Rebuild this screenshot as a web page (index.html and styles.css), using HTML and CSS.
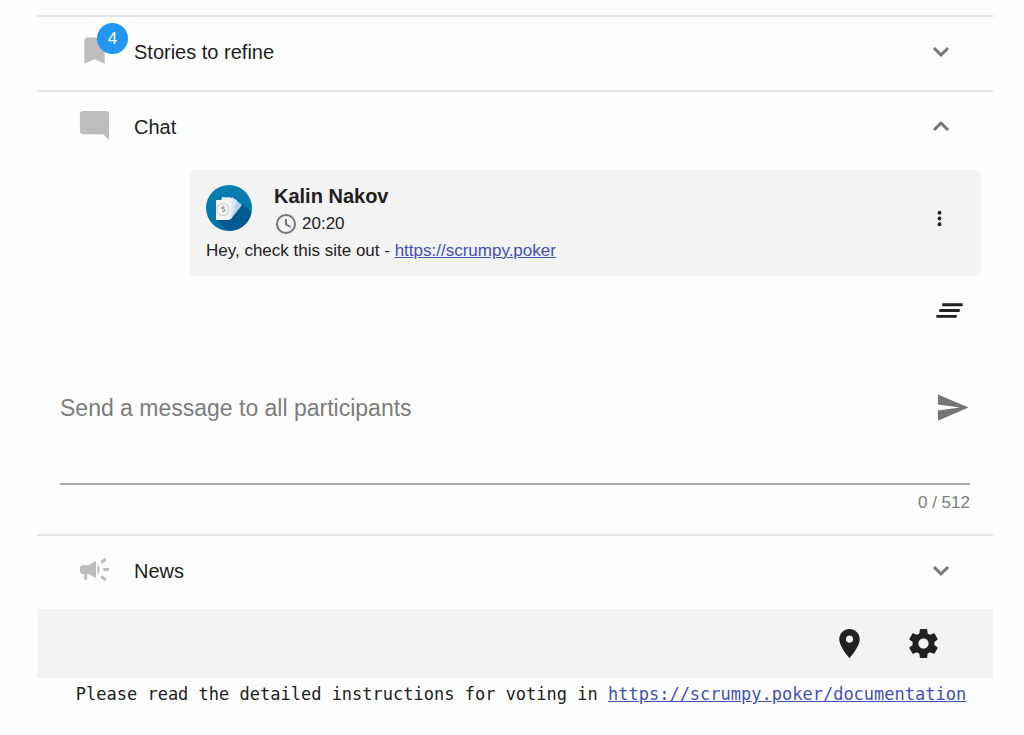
FILE: index.html
```
<!DOCTYPE html>
<html lang="en">
<head>
  <meta charset="UTF-8" />
  <title>Scrumpy Planning Poker</title>
  <meta name="viewport" content="width=device-width, initial-scale=1.0" />
  <link rel="stylesheet" href="styles.css">
</head>
<body>

<main class="room">

  <section class="panel">
    <button type="button" class="panel-header" aria-expanded="false">
      <span class="panel-icon">
        <svg class="icon" viewBox="0 0 24 24"><path d="M17 3H7c-1.1 0-1.99.9-1.99 2L5 21l7-3 7 3V5c0-1.1-.9-2-2-2z"/></svg>
        <span class="badge">4</span>
      </span>
      <span class="panel-title">Stories to refine</span>
      <svg class="chevron" viewBox="0 0 24 24"><path d="M5 8l7 7 7-7"/></svg>
    </button>
  </section>

  <section class="panel">
    <button type="button" class="panel-header" aria-expanded="true" aria-controls="chat">
      <span class="panel-icon">
        <svg class="icon" viewBox="0 0 24 24"><path d="M21.99 4c0-1.1-.89-2-1.99-2H4c-1.1 0-2 .9-2 2v12c0 1.1.9 2 2 2h14l4 4-.01-18z"/></svg>
      </span>
      <span class="panel-title">Chat</span>
      <svg class="chevron" viewBox="0 0 24 24"><path d="M5 15l7-7 7 7"/></svg>
    </button>

    <div class="chat" id="chat">
      <article class="message">
        <div class="message-content">
          <div class="message-head">
            <svg class="avatar" viewBox="0 0 46 46">
              <defs>
                <linearGradient id="avatarBg" x1="0" y1="0" x2="0" y2="1">
                  <stop offset="0" stop-color="#087fb0"/>
                  <stop offset="1" stop-color="#0670a2"/>
                </linearGradient>
                <clipPath id="avatarClip"><circle cx="23" cy="23" r="23"/></clipPath>
              </defs>
              <g clip-path="url(#avatarClip)">
                <rect width="46" height="46" fill="url(#avatarBg)"/>
                <path d="M11 35L23 47H47V28L36 19L25 32z" fill="#005a92"/>
                <path d="M26 12L36 20L25 34L15 27z" fill="#b5d3ee"/>
                <path d="M22 12L31 15L25 34L14 31z" fill="#d9e9f7"/>
                <path d="M16 12L26 13L25 33L12 32z" fill="#edf3f9"/>
                <rect x="10" y="15" width="14" height="20" rx="1" fill="#f5f5f5"/>
                <circle cx="17" cy="24.5" r="6" fill="#f5f5f5" stroke="#cfcfcf" stroke-width="1.2"/>
                <path d="M18.500 22h-2.500v2c2.500-.5 3 .5 2.700 1.700-.4 1.300-2 1.300-2.700.3" fill="none" stroke="#777"/>
              </g>
            </svg>
            <div>
              <div class="message-author">Kalin Nakov</div>
              <div class="message-time">
                <svg class="icon-small" viewBox="0 0 24 24"><circle cx="12" cy="12" r="9"/><path d="M12 7v5.500l4.500 2.500"/></svg>
                <time>20:20</time>
              </div>
            </div>
          </div>
          <p class="message-text">Hey, check this site out - <a href="https://scrumpy.poker">https://scrumpy.poker</a></p>
        </div>
        <button type="button" class="icon-button message-menu" aria-label="Message options">
          <svg class="icon-more" viewBox="0 0 24 24"><circle cx="12" cy="6" r="2"/><circle cx="12" cy="12" r="2"/><circle cx="12" cy="18" r="2"/></svg>
        </button>
      </article>

      <div class="chat-actions">
        <button type="button" class="icon-button" aria-label="Clear all messages">
          <svg class="icon" viewBox="0 0 24 24"><path d="M5 13h14v-2H5v2zm-2 4h14v-2H3v2zM7 7v2h14V7H7z"/></svg>
        </button>
      </div>

      <form class="composer">
        <div class="composer-field">
          <textarea maxlength="512" aria-label="Message" placeholder="Send a message to all participants"></textarea>
          <button type="submit" class="icon-button send" aria-label="Send">
            <svg class="icon" viewBox="0 0 24 24"><path d="M2.01 21L23 12 2.01 3 2 10l15 2-15 2z"/></svg>
          </button>
        </div>
        <div class="counter">0 / 512</div>
      </form>
    </div>
  </section>

  <section class="panel">
    <button type="button" class="panel-header" aria-expanded="false">
      <span class="panel-icon">
        <svg class="icon" viewBox="0 0 24 24"><path d="M18 11v2h4v-2h-4zm-2 6.61c.96.71 2.21 1.65 3.2 2.39.4-.53.8-1.07 1.2-1.6-.99-.74-2.24-1.68-3.2-2.4-.4.54-.8 1.08-1.2 1.61zM20.4 5.6c-.4-.53-.8-1.07-1.2-1.6-.99.74-2.24 1.68-3.2 2.4.4.53.8 1.07 1.2 1.6.96-.72 2.21-1.65 3.2-2.4zM4 9c-1.1 0-2 .9-2 2v2c0 1.1.9 2 2 2h1v4h2v-4h1l5 3V6L8 9H4zm11.5 3c0-1.33-.58-2.53-1.5-3.35v6.69c.92-.81 1.5-2.01 1.5-3.34z"/></svg>
      </span>
      <span class="panel-title">News</span>
      <svg class="chevron" viewBox="0 0 24 24"><path d="M5 8l7 7 7-7"/></svg>
    </button>
  </section>

  <div class="toolbar">
    <button type="button" class="icon-button" aria-label="Location">
      <svg class="icon" viewBox="0 0 24 24"><path d="M12 2C8.13 2 5 5.13 5 9c0 5.25 7 13 7 13s7-7.75 7-13c0-3.87-3.13-7-7-7zm0 9.5c-1.38 0-2.5-1.12-2.5-2.5s1.12-2.5 2.5-2.5 2.5 1.12 2.5 2.5-1.12 2.5-2.5 2.5z"/></svg>
    </button>
    <button type="button" class="icon-button" aria-label="Settings">
      <svg class="icon" viewBox="0 0 24 24"><path d="M19.43 12.98c.04-.32.07-.64.07-.98s-.03-.66-.07-.98l2.11-1.65c.19-.15.24-.42.12-.64l-2-3.46c-.12-.22-.39-.3-.61-.22l-2.49 1c-.52-.4-1.08-.73-1.69-.98l-.38-2.65C14.46 2.18 14.25 2 14 2h-4c-.25 0-.46.18-.49.42l-.38 2.65c-.61.25-1.17.59-1.69.98l-2.49-1c-.23-.09-.49 0-.61.22l-2 3.46c-.13.22-.07.49.12.64l2.11 1.65c-.04.32-.07.65-.07.98s.03.66.07.98l-2.11 1.65c-.19.15-.24.42-.12.64l2 3.46c.12.22.39.3.61.22l2.49-1c.52.4 1.08.73 1.69.98l.38 2.65c.03.24.24.42.49.42h4c.25 0 .46-.18.49-.42l.38-2.65c.61-.25 1.17-.59 1.69-.98l2.49 1c.23.09.49 0 .61-.22l2-3.46c.12-.22.07-.49-.12-.64l-2.11-1.65zM12 15.5c-1.93 0-3.5-1.57-3.5-3.5s1.57-3.5 3.5-3.5 3.5 1.57 3.5 3.5-1.57 3.5-3.5 3.5z"/></svg>
    </button>
  </div>

  <footer class="footnote">Please read the detailed instructions for voting in <a href="https://scrumpy.poker/documentation">https://scrumpy.poker/documentation</a></footer>

</main>

</body>
</html>
```
FILE: styles.css
```
* {
  box-sizing: border-box;
}

body {
  font-family: "Liberation Sans", Arial, sans-serif;
  font-size: 17px;
  line-height: 22px;
  color: #212121;
  background-color: #fefefe;
  margin: 0;
  padding: 15px 31px 15px 37px;
}

a {
  color: #3f51b5;
}

button {
  font: inherit;
  color: inherit;
  background: none;
  border: none;
  padding: 0;
  cursor: pointer;
}

svg {
  display: block;
  flex-shrink: 0;
}

.icon {
  width: 35px;
  height: 35px;
  fill: currentColor;
}

/* Panels */
.panel {
  border-top: 2px solid #e4e4e4;
}

.panel-header {
  display: flex;
  align-items: center;
  gap: 22px;
  width: 100%;
  height: 69px;
  padding: 0 40px;
  font-size: 20px;
  text-align: left;
}

.panel-header[aria-expanded="false"] {
  margin-bottom: 4px;
}

.panel-icon {
  position: relative;
  margin-bottom: 2px;
  color: #bdbdbd;
}

.panel-title {
  flex: 1;
}

.badge {
  position: absolute;
  top: -10px;
  left: 20px;
  width: 31px;
  height: 31px;
  border-radius: 50%;
  background-color: #2196f3;
  color: #fff;
  font-size: 17px;
  line-height: 31px;
  text-align: center;
}

.chevron {
  width: 24px;
  height: 24px;
  fill: none;
  stroke: #757575;
  stroke-width: 3;
}

/* Chat */
.chat {
  padding: 9px 23px 20px;
}

.message {
  display: flex;
  align-items: center;
  margin: 0 -11px 0 129px;
  padding: 15px 30px 14px 17px;
  background-color: #f3f3f3;
  border-radius: 6px;
}

.message-content {
  flex: 1;
}

.message-head {
  display: flex;
  gap: 22px;
}

.avatar {
  width: 46px;
  height: 46px;
}

.message-author {
  font-size: 20px;
  font-weight: bold;
}

.message-time {
  display: flex;
  align-items: center;
  gap: 4px;
  height: 33px;
}

.icon-small {
  width: 24px;
  height: 24px;
  fill: none;
  stroke: #757575;
  stroke-width: 2;
}

.message-text {
  margin: 0;
}

.message-menu {
  padding-bottom: 10px;
}

.icon-more {
  width: 23px;
  height: 23px;
  fill: currentColor;
}

.chat-actions {
  display: flex;
  justify-content: flex-end;
  padding: 17px 3px 0;
}

.composer {
  margin-top: 62px;
}

.composer-field {
  display: flex;
  align-items: flex-start;
  height: 95px;
  border-bottom: 2px solid #acacac;
}

.composer-field textarea {
  flex: 1;
  height: 100%;
  padding: 5px 0 0;
  border: none;
  outline: none;
  resize: none;
  background: none;
  color: inherit;
  font-family: inherit;
  font-size: 23px;
  line-height: 26px;
}

.composer-field textarea::placeholder {
  color: #7c7c7c;
}

.send {
  color: #757575;
}

.counter {
  margin-top: 7px;
  color: #7c7c7c;
  text-align: right;
}

/* Bottom bar */
.toolbar {
  display: flex;
  justify-content: flex-end;
  align-items: center;
  gap: 39px;
  height: 69px;
  padding: 0 52px;
  background-color: #f3f3f3;
}

.footnote {
  padding: 5px 22px 0 34px;
  font-family: "DejaVu Sans Mono", monospace;
  text-align: center;
}
```
